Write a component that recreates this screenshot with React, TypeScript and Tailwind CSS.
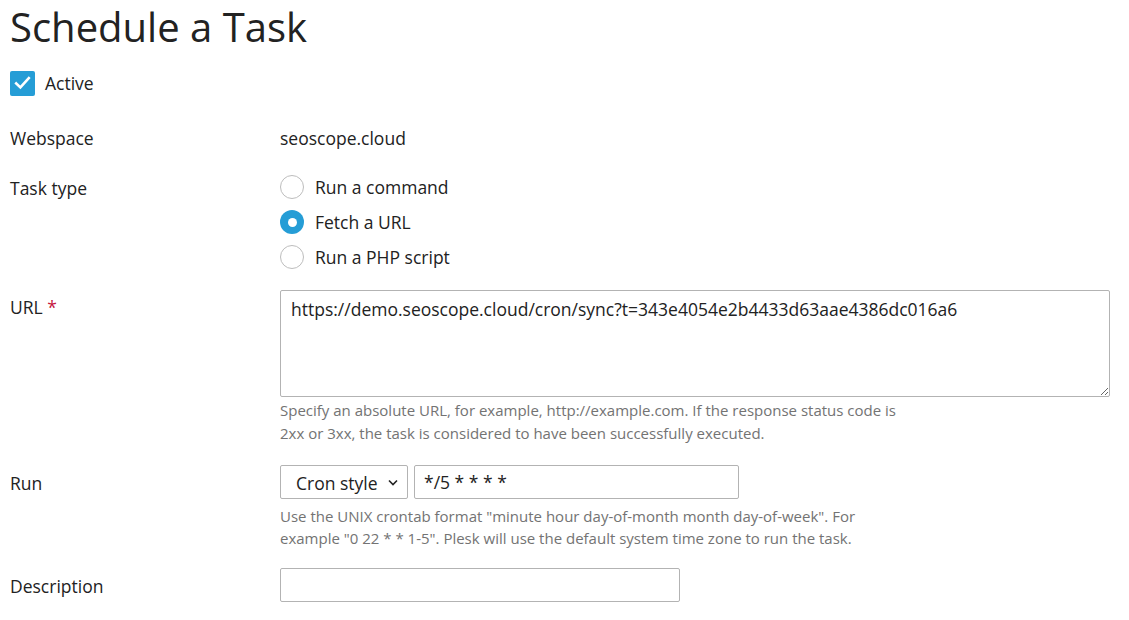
import React from "react";

const font = { fontFamily: '"Open Sans", "Noto Sans", sans-serif' };

function Radio({ checked, label }: { checked?: boolean; label: string }) {
  return (
    <div className="flex items-center h-6">
      {checked ? (
        <span className="w-6 h-6 rounded-full bg-[#259dd6] flex items-center justify-center shrink-0">
          <span className="w-[9px] h-[9px] rounded-full bg-white" />
        </span>
      ) : (
        <span className="w-6 h-6 rounded-full border border-[#bdbdbd] bg-white shrink-0" />
      )}
      <span className="ml-[11px] text-[17.5px] leading-6 text-[#222]">{label}</span>
    </div>
  );
}

export default function App() {
  return (
    <div className="w-[1129px] h-[620px] bg-white text-[#222] overflow-hidden" style={font}>
      <div className="pl-[10px]">
        <h1 className="pt-[3px] text-[40px] leading-[48px] font-normal text-[#222]">Schedule a Task</h1>

        <div className="mt-[20px] flex items-center h-6">
          <span className="w-[25px] h-[25px] rounded-[2px] bg-[#259dd6] flex items-center justify-center">
            <svg width="17" height="14" viewBox="0 0 17 14" fill="none">
              <path d="M2.2 7.4 L6.4 11.4 L14.8 2.2" stroke="white" strokeWidth="2.6" strokeLinecap="square" strokeLinejoin="miter" />
            </svg>
          </span>
          <span className="ml-[10px] text-[17.5px] leading-6">Active</span>
        </div>

        <div className="mt-[31px] flex text-[17.5px] leading-6">
          <div className="w-[270px]">Webspace</div>
          <div>seoscope.cloud</div>
        </div>

        <div className="mt-[25px] flex text-[17.5px] leading-6">
          <div className="w-[270px] pt-[1px]">Task type</div>
          <div className="flex flex-col gap-[11px]">
            <Radio label="Run a command" />
            <Radio checked label="Fetch a URL" />
            <Radio label="Run a PHP script" />
          </div>
        </div>

        <div className="mt-[21px] flex text-[17.5px] leading-6">
          <div className="w-[270px] pt-[5px]">
            URL <span className="text-[#c5163e]">*</span>
          </div>
          <div className="w-[830px]">
            <textarea
              readOnly
              defaultValue="https://demo.seoscope.cloud/cron/sync?t=343e4054e2b4433d63aae4386dc016a6"
              className="block w-[830px] h-[107px] border border-[#b3b3b3] rounded-[2px] px-[10px] py-[6px] text-[17.5px] leading-6 text-[#222] outline-none"
              style={font}
            />
            <p className="mt-[2px] text-[15px] leading-[23px] text-[#737373]">
              Specify an absolute URL, for example, http://example.com. If the response status code is
              <br />
              2xx or 3xx, the task is considered to have been successfully executed.
            </p>
          </div>
        </div>

        <div className="mt-[20px] flex text-[17.5px] leading-6">
          <div className="w-[270px] pt-[6px]">Run</div>
          <div>
            <div className="flex gap-[6px]">
              <div className="w-[128px] h-[34px] border border-[#b3b3b3] rounded-[2px] flex items-center justify-between pl-[15px] pr-[9px]">
                <span className="pt-[2px]">Cron style</span>
                <svg width="10" height="7" viewBox="0 0 10 7" fill="none">
                  <path d="M1 1.5 L5 5.5 L9 1.5" stroke="#222" strokeWidth="1.6" />
                </svg>
              </div>
              <div className="w-[325px] h-[34px] border border-[#b3b3b3] rounded-[2px] flex items-center pl-[9px]">
                */5 * * * *
              </div>
            </div>
            <p className="mt-[6px] text-[15px] leading-[22px] text-[#737373]">
              Use the UNIX crontab format "minute hour day-of-month month day-of-week". For
              <br />
              example "0 22 * * 1-5". Plesk will use the default system time zone to run the task.
            </p>
          </div>
        </div>

        <div className="mt-[19px] flex text-[17.5px] leading-6">
          <div className="w-[270px] pt-[6px]">Description</div>
          <div className="w-[400px] h-[34px] border border-[#b3b3b3] rounded-[2px]" />
        </div>
      </div>
    </div>
  );
}
